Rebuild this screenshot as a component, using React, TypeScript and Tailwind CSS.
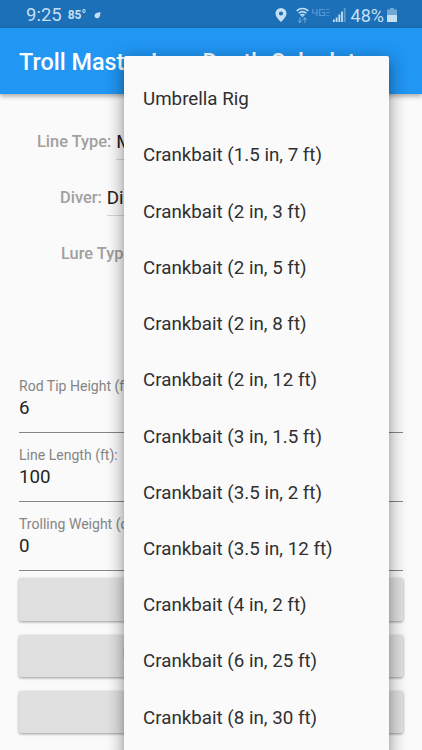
const lures = [
  'Umbrella Rig',
  'Crankbait (1.5 in, 7 ft)',
  'Crankbait (2 in, 3 ft)',
  'Crankbait (2 in, 5 ft)',
  'Crankbait (2 in, 8 ft)',
  'Crankbait (2 in, 12 ft)',
  'Crankbait (3 in, 1.5 ft)',
  'Crankbait (3.5 in, 2 ft)',
  'Crankbait (3.5 in, 12 ft)',
  'Crankbait (4 in, 2 ft)',
  'Crankbait (6 in, 25 ft)',
  'Crankbait (8 in, 30 ft)',
];

const fields = [
  { label: 'Rod Tip Height (ft):', value: '6' },
  { label: 'Line Length (ft):', value: '100' },
  { label: 'Trolling Weight (oz):', value: '0' },
];

const buttons = [
  { id: 'depth', label: '' },
  { id: 'length', label: 'UPDATE LINE LENGTH' },
  { id: 'reset', label: '' },
];

const StatusBar = () => (
  <div className="flex h-7 items-center bg-[#1b70b8] pl-[26px] pr-[25px] text-[#c5dff3]">
    <span className="mt-[4px] text-[18.5px]">9:25</span>
    <span className="ml-[6px] mt-[2px] text-[12px] font-bold">85°</span>
    <svg className="ml-[8px] mt-0.5 h-[7px] w-[7px]" viewBox="0 0 7 7" fill="currentColor">
      <path d="M6.500 0.200C3.500 0.300 0.500 1.200 0.500 3.800c0 1.500 1 2.500 2.500 2.500C5.800 6.300 6.200 3.400 6.500 0.200z" />
    </svg>
    <div className="ml-auto flex items-center">
      <svg className="mt-0.5 h-[14px] w-[12px]" viewBox="0 0 12 14" fill="currentColor">
        <path
          fillRule="evenodd"
          d="M6 0a5.500 5.500 0 0 0-5.500 5.500C.5 9.300 6 14 6 14s5.500-4.700 5.500-8.500A5.500 5.500 0 0 0 6 0zm0 3.400a2.100 2.100 0 1 1 0 4.200 2.100 2.100 0 0 1 0-4.200z"
        />
      </svg>
      <svg className="ml-[9px] mt-0.5 h-4 w-[13px]" viewBox="0 0 13 16" fill="none" stroke="currentColor">
        <path strokeWidth="1.600" d="M.7 3.800c3.400-3 8.200-3 11.600 0M2.700 6.200c2.300-2 5.300-2 7.600 0M4.500 8.400c1.200-1 2.800-1 4 0" />
        <path fill="currentColor" stroke="none" d="M5.200 9.200h2.600L6.500 10.600z" />
        <path opacity=".55" d="M4 10.500v5M2.200 13.500L4 15.300l1.800-1.800M9 15.800v-5M7.200 12.600L9 10.800l1.800 1.800" />
      </svg>
      <svg className="ml-[3px] -mt-[3px] h-[9px] w-[18px] text-[#5698cf]" viewBox="0 0 18 9" fill="none" stroke="currentColor">
        <path strokeWidth="1.2" d="M.7 1v4h5.300M5 1v7M13 1.500H7.700v6h4.800v-3h-2.500" />
        <path opacity=".75" d="M14 1.500h3.500M14 4.500h3.500M14 7.500h3.500" />
      </svg>
      <svg className="ml-[3px] mt-[2px] h-[14px] w-[13px]" viewBox="0 0 13 14" fill="currentColor">
        <path d="M0 11.500h1.800V14H0zM2.700 9.500h1.800V14H2.700zM5.400 6.500h1.800V14H5.400zM8.100 3.500h1.800V14H8.100z" />
        <path opacity=".4" d="M10.800 0h1.800v14h-1.800z" />
      </svg>
      <span className="ml-[5px] mt-[3px] text-[18px]">48%</span>
      <svg className="ml-[3px] mt-[2px] h-[14px] w-[10px]" viewBox="0 0 10 14" fill="currentColor">
        <path opacity=".5" d="M3 0h4v1.500h3V7H0V1.500h3z" />
        <path d="M0 7h10v7H0z" />
      </svg>
    </div>
  </div>
);

const LureMenu = () => (
  <div className="absolute left-[124px] top-14 h-[720px] w-[265px] rounded-[2px] bg-[#fafafa] pt-[15.2px] shadow-[0_6px_6px_-2px_rgba(0,0,0,0.22),0_8px_16px_1px_rgba(0,0,0,0.18),0_3px_18px_2px_rgba(0,0,0,0.2)]">
    {lures.map((lure) => (
      <div key={lure} className="flex h-[56.22px] items-center pl-[19px] text-[18.75px] text-[#303030]">
        {lure}
      </div>
    ))}
  </div>
);

export default function App() {
  return (
    <div className="relative h-[750px] w-[422px] overflow-hidden bg-[#fafafa] font-['Roboto',sans-serif] whitespace-nowrap">
      <StatusBar />
      <header className="flex h-[66px] items-center bg-[#2196f3] pl-[19px] text-[23.4px] font-medium text-white shadow-[0_2px_5px_rgba(0,0,0,0.35)]">
        <h1 className="mt-[4px]">Troll Master Lure Depth Calculator</h1>
      </header>

      <main className="px-[19px]">
        <div className="pt-[20px] text-[16.4px] font-medium text-[#a0a0a0]">
          <div className="flex h-[56.25px] items-center pl-[18px]">
            <span>Line Type:</span>
            <span className="ml-[5px] flex h-[36px] w-[245px] items-center border-b border-[#d5d5d5] text-[18.75px] font-normal text-[#212121]">
              Monofilament
            </span>
          </div>
          <div className="flex h-[56.25px] items-center pl-[41px]">
            <span>Diver:</span>
            <span className="ml-[5px] flex h-[36px] w-[230px] items-center border-b border-[#d5d5d5] text-[18.75px] font-normal text-[#212121]">
              Dipsy Diver
            </span>
          </div>
          <div className="flex h-[56.25px] items-center pl-[42px]">
            <span>Lure Type:</span>
          </div>
        </div>

        <div className="mt-[84px]">
          {fields.map((field) => (
            <div key={field.label} className="h-[69.2px] pt-[11px]">
              <div className="flex h-[55px] flex-col border-b border-[#868686]">
                <span className="text-[14.06px] leading-[17px] text-[#858585]">{field.label}</span>
                <span className="mt-[2px] text-[18.75px] leading-[22px] text-[#252525]">{field.value}</span>
              </div>
            </div>
          ))}
        </div>

        <div className="mt-[4px] flex flex-col gap-[14px]">
          {buttons.map((button) => (
            <button
              key={button.id}
              className="h-[42.2px] w-full rounded-[2px] bg-[#e0e0e0] text-[16.4px] font-medium tracking-[0.6px] text-[#8b8b8b] shadow-[0_1px_3px_rgba(0,0,0,0.4)]"
            >
              {button.label}
            </button>
          ))}
        </div>
      </main>

      <LureMenu />
    </div>
  );
}
